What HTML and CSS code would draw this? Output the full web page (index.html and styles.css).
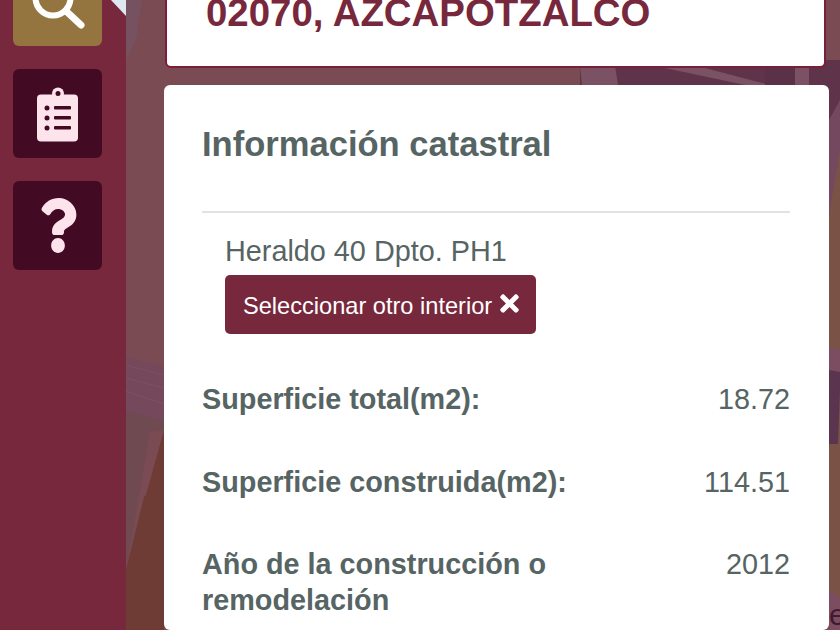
FILE: index.html
```html
<!DOCTYPE html>
<html lang="es">
<head>
  <meta charset="UTF-8">
  <title>Información catastral</title>
  <link rel="stylesheet" href="styles.css">
</head>
<body>
  <!-- mapa de fondo -->
  <svg class="map-bg" width="840" height="630" viewBox="0 0 840 630">
    <rect width="840" height="630" fill="#7a4b52"/>
    <polygon points="126,0 142,0 136,40 126,60" fill="#76515f"/>
    <polygon points="126,357 164,366 164,421 126,411" fill="#75485c"/>
    <path d="M126 365L164 375M126 378L164 388M126 391L164 404" stroke="#7d5064" stroke-width="1" fill="none"/>
    <polygon points="126,411 164,421 164,430 150,432 126,570" fill="#6f4a50"/>
    <polygon points="164,430 164,630 126,630 126,570 144,497 146,495" fill="#6e3b35"/>
    <polygon points="580,60 840,60 840,300 829,300 829,90 580,90" fill="#5f3349"/>
    <polygon points="580,66 615,66 618,85 582,85" fill="#7a5263"/>
    <polygon points="665,68 705,68 770,85 745,85" fill="#7a5263"/>
    <rect x="795" y="68" width="14" height="17" fill="#7a5263"/>
    <rect x="765" y="68" width="30" height="17" fill="#5a3146"/>
    <polygon points="829,120 840,100 840,170 829,260" fill="#74495f"/>
    <polygon points="829,215 840,150 840,345 829,345" fill="#7a5246"/>
    <rect x="829" y="345" width="11" height="285" fill="#7a5246"/>
    <polygon points="829,347 840,350 840,372 829,370" fill="#7c4d60"/>
    <polygon points="829,370 840,372 840,390 838,444 829,444" fill="#5b3450"/>
    <polygon points="829,590 840,598 840,630 829,630" fill="#7c4d60"/>
    <text x="829" y="625" class="map-label">e</text>
  </svg>
  <div class="page">
    <aside class="side">
      <span class="corner"></span>
      <button class="side-btn side-btn-active">
        <svg class="ico-search" width="60" height="60" viewBox="0 0 60 60">
          <circle cx="24" cy="24" r="17.5" fill="none" stroke="#fff" stroke-width="6"/>
          <path d="M37 37L52 51" stroke="#fff" stroke-width="7" stroke-linecap="round"/>
        </svg>
      </button>
      <button class="side-btn">
        <svg width="42" height="56" viewBox="0 0 42 56">
          <circle cx="21" cy="7.500" r="6" fill="#fde4ec"/>
          <rect y="8.500" width="41" height="47" rx="4" fill="#fde4ec"/>
          <circle cx="21" cy="7.500" r="2.500" fill="#430a24"/>
          <g fill="#430a24">
            <circle cx="10" cy="22" r="2.500"/><rect x="17" y="20" width="17" height="3.500" rx="1"/>
            <circle cx="10" cy="32" r="2.500"/><rect x="17" y="30" width="17" height="3.500" rx="1"/>
            <circle cx="10" cy="42" r="2.500"/><rect x="17" y="40" width="17" height="3.500" rx="1"/>
          </g>
        </svg>
      </button>
      <button class="side-btn">
        <svg width="38" height="55" viewBox="0 0 384 512" preserveAspectRatio="none">
          <path fill="#fde4ec" d="M202.021 0C122.202 0 70.503 32.703 29.914 91.026c-7.363 10.58-5.093 25.086 5.178 32.874l43.138 32.709c10.373 7.865 25.132 6.026 33.253-4.148 25.049-31.381 43.63-49.449 82.757-49.449 30.764 0 68.816 19.799 68.816 49.631 0 22.552-18.617 34.134-48.993 51.164-35.423 19.86-82.299 44.576-82.299 106.405V320c0 13.255 10.745 24 24 24h72.471c13.255 0 24-10.745 24-24v-5.773c0-42.86 125.268-44.645 125.268-160.627C377.504 66.256 286.902 0 202.021 0zM192 373.459c-38.196 0-69.271 31.075-69.271 69.271 0 38.195 31.075 69.27 69.271 69.27s69.271-31.075 69.271-69.271-31.075-69.27-69.271-69.27z"/>
        </svg>
      </button>
    </aside>
    <main class="content">
      <section class="addr-card">
        <h1>02070, AZCAPOTZALCO</h1>
      </section>
      <section class="info-card">
        <h2>Información catastral</h2>
        <hr>
        <div class="interior">
          <p>Heraldo 40 Dpto. PH1</p>
          <button class="interior-btn">Seleccionar otro interior
            <svg width="19" height="27" viewBox="0 0 352 512">
              <path fill="#fff" d="M242.72 256l100.07-100.07c12.28-12.28 12.28-32.19 0-44.48l-22.24-22.24c-12.28-12.28-32.19-12.28-44.48 0L176 189.28 75.93 89.21c-12.28-12.28-32.19-12.28-44.48 0L9.21 111.45c-12.28 12.28-12.28 32.19 0 44.48L109.28 256 9.21 356.07c-12.28 12.28-12.28 32.19 0 44.48l22.24 22.24c12.28 12.28 32.2 12.28 44.48 0L176 322.72l100.07 100.07c12.28 12.28 32.2 12.28 44.48 0l22.24-22.24c12.28-12.28 12.28-32.19 0-44.48L242.72 256z"/>
            </svg>
          </button>
        </div>
        <div class="data-row"><strong>Superficie total(m2):</strong><span>18.72</span></div>
        <div class="data-row"><strong>Superficie construida(m2):</strong><span>114.51</span></div>
        <div class="data-row data-row-last"><strong>Año de la construcción o remodelación</strong><span>2012</span></div>
      </section>
    </main>
  </div>
</body>
</html>
```

FILE: styles.css
```css
html, body {
  margin: 0; padding: 0;
  width: 840px; height: 630px;
  overflow: hidden;
  font-family: 'Liberation Sans', Arial, sans-serif;
  color: #566464;
}
.map-bg { position: absolute; left: 0; top: 0; }
.map-label { font-size: 30px; fill: #3f1a30; }
.page { position: relative; display: flex; height: 630px; }

/* barra lateral */
.side {
  position: relative;
  width: 126px; flex: none;
  margin-top: -43px; padding: 0 0 0 13px;
  box-sizing: border-box;
  height: 673px;
  background: #78283c;
  display: flex; flex-direction: column; gap: 23px;
}
.corner {
  position: absolute; right: 0; top: 43px;
  width: 0; height: 0;
  border-top: 16px solid #dfe8f0;
  border-left: 15px solid transparent;
}
.side-btn {
  width: 89px; height: 89px; flex: none;
  padding: 0; border: none; border-radius: 6px;
  background: #430a24;
  display: flex; align-items: center; justify-content: center;
}
.side-btn-active { background: #95753f; }
.ico-search { margin: 4px 0 0 2px; }

/* tarjetas */
.content {
  width: 665px; margin-left: 38px;
  display: flex; flex-direction: column; gap: 17px;
}
.addr-card {
  margin: -12px 3px 0 1px;
  padding: 0 39px 30px;
  background: #fff;
  border: 2px solid #7a1f3a;
  border-radius: 6px;
}
.addr-card h1 {
  margin: 0;
  font-size: 38.4px; line-height: 46px; font-weight: 700;
  color: #78283c;
}
.info-card {
  flex: 1;
  padding: 35px 39px 0 38px;
  background: #fff;
  border-radius: 6px;
}
.info-card h2 {
  margin: 0;
  font-size: 34.56px; line-height: 48px; font-weight: 700;
}
.info-card hr {
  margin: 43px 0 0;
  border: none; border-top: 2px solid #dfe3e6;
}
.interior { padding: 20px 0 0 23px; }
.interior p { margin: 0 0 5px; font-size: 28.8px; line-height: 37px; }
.interior-btn {
  display: flex; align-items: center; gap: 8px;
  height: 59px; padding: 3px 17px 0 18px;
  border: none; border-radius: 5px;
  background: #78283c; color: #fff;
  font: 23.6px 'Liberation Sans', Arial, sans-serif;
}
.interior-btn svg { margin-top: -5px; }
.data-row {
  display: flex; justify-content: space-between; gap: 40px;
  font-size: 28.8px; line-height: 36px;
  margin-top: 47px;
}
.data-row-last { margin-top: 46px; }
.data-row strong { max-width: 400px; }
```
